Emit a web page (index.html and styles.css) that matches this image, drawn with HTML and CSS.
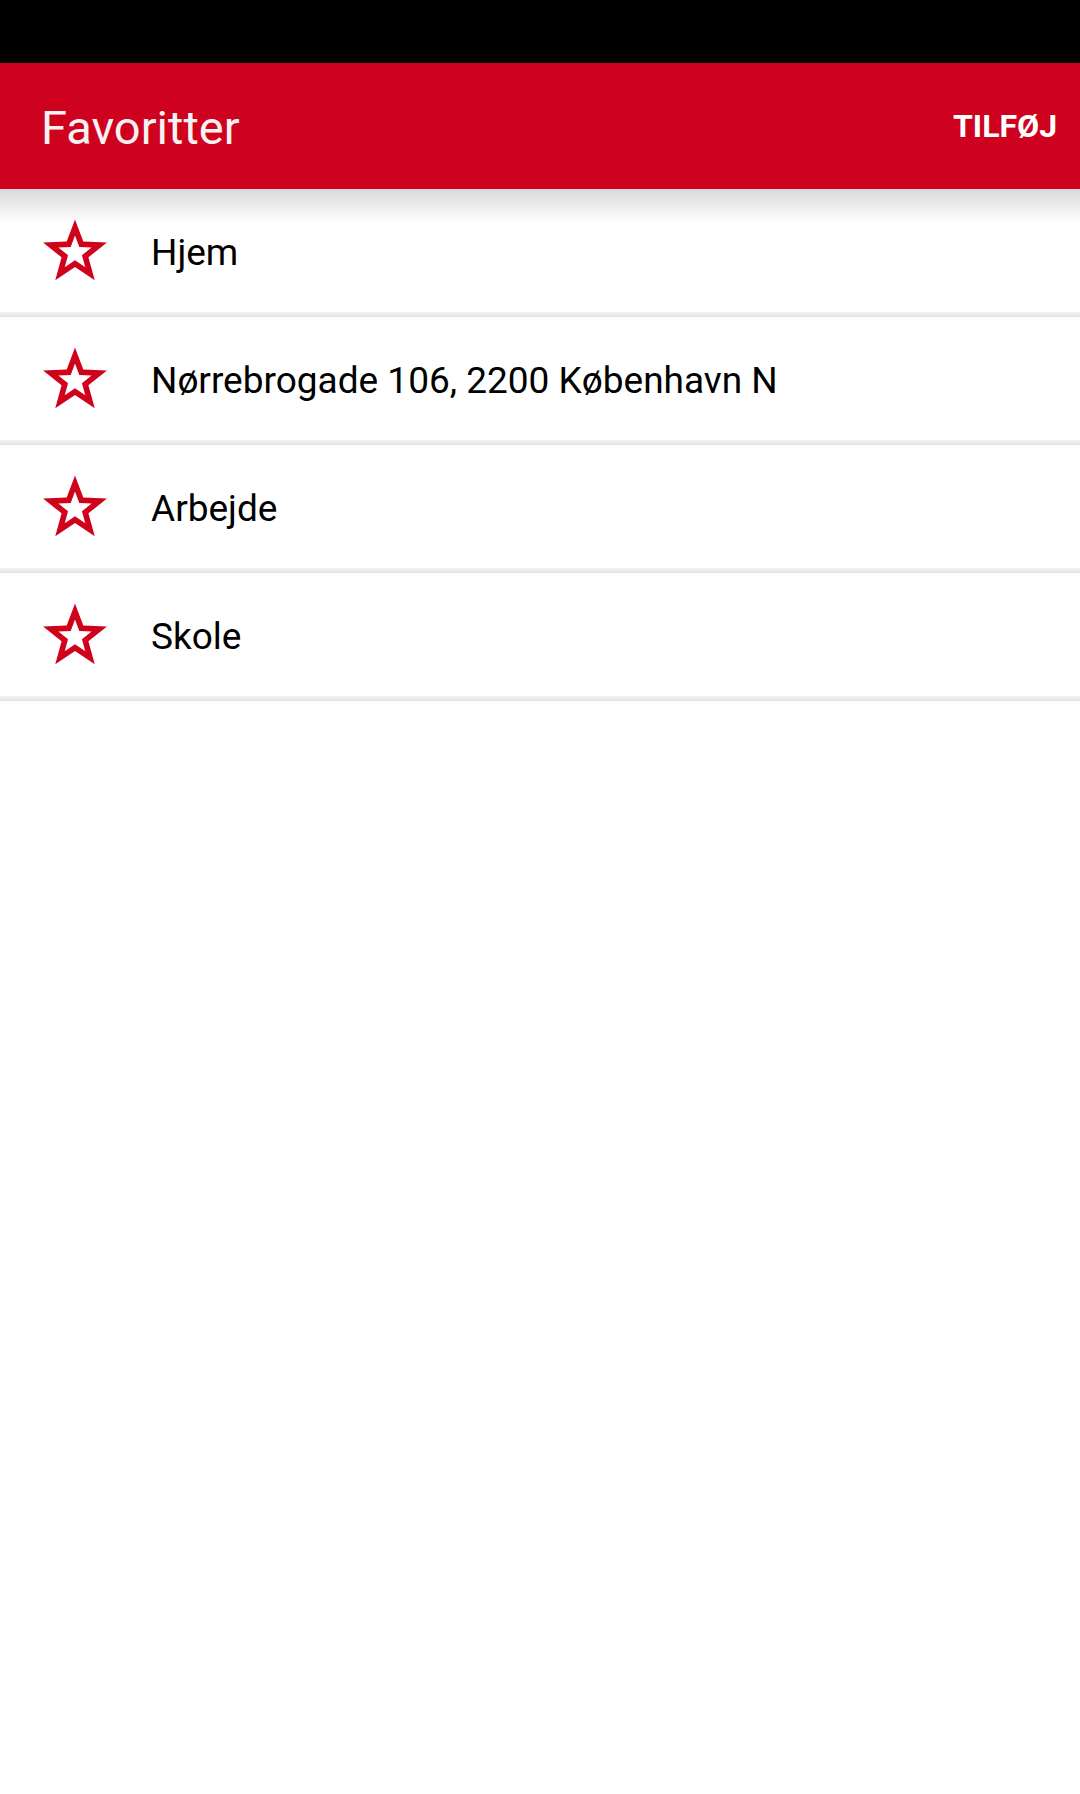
FILE: index.html
```html
<!DOCTYPE html>
<html lang="da">
<head>
<meta charset="utf-8">
<title>Favoritter</title>
<link rel="stylesheet" href="styles.css">
</head>
<body>
<div class="statusbar"></div>
<header class="appbar">
  <h1 class="title">Favoritter</h1>
  <button class="action">TILFØJ</button>
</header>
<main class="list">
  <div class="shadow"></div>
  <div class="row">
    <svg class="star" viewBox="-34 -34 68 68" width="68" height="68"><path fill-rule="evenodd" d="M0,-33.6 L8.29,-11.41 L31.96,-10.38 L13.41,4.36 L19.75,27.18 L0,14.1 L-19.75,27.18 L-13.41,4.36 L-31.96,-10.38 L-8.29,-11.41 Z M0,-17.47 L-4.31,-5.93 L-16.62,-5.4 L-6.97,2.27 L-10.27,14.13 L0,7.33 L10.27,14.13 L6.97,2.27 L16.62,-5.4 L4.31,-5.93 Z"/></svg>
    <span class="label">Hjem</span>
  </div>
  <div class="sep"></div>
  <div class="row">
    <svg class="star" viewBox="-34 -34 68 68" width="68" height="68"><path fill-rule="evenodd" d="M0,-33.6 L8.29,-11.41 L31.96,-10.38 L13.41,4.36 L19.75,27.18 L0,14.1 L-19.75,27.18 L-13.41,4.36 L-31.96,-10.38 L-8.29,-11.41 Z M0,-17.47 L-4.31,-5.93 L-16.62,-5.4 L-6.97,2.27 L-10.27,14.13 L0,7.33 L10.27,14.13 L6.97,2.27 L16.62,-5.4 L4.31,-5.93 Z"/></svg>
    <span class="label">Nørrebrogade 106, 2200 København N</span>
  </div>
  <div class="sep"></div>
  <div class="row">
    <svg class="star" viewBox="-34 -34 68 68" width="68" height="68"><path fill-rule="evenodd" d="M0,-33.6 L8.29,-11.41 L31.96,-10.38 L13.41,4.36 L19.75,27.18 L0,14.1 L-19.75,27.18 L-13.41,4.36 L-31.96,-10.38 L-8.29,-11.41 Z M0,-17.47 L-4.31,-5.93 L-16.62,-5.4 L-6.97,2.27 L-10.27,14.13 L0,7.33 L10.27,14.13 L6.97,2.27 L16.62,-5.4 L4.31,-5.93 Z"/></svg>
    <span class="label">Arbejde</span>
  </div>
  <div class="sep"></div>
  <div class="row">
    <svg class="star" viewBox="-34 -34 68 68" width="68" height="68"><path fill-rule="evenodd" d="M0,-33.6 L8.29,-11.41 L31.96,-10.38 L13.41,4.36 L19.75,27.18 L0,14.1 L-19.75,27.18 L-13.41,4.36 L-31.96,-10.38 L-8.29,-11.41 Z M0,-17.47 L-4.31,-5.93 L-16.62,-5.4 L-6.97,2.27 L-10.27,14.13 L0,7.33 L10.27,14.13 L6.97,2.27 L16.62,-5.4 L4.31,-5.93 Z"/></svg>
    <span class="label">Skole</span>
  </div>
  <div class="sep"></div>
</main>
</body>
</html>
```
FILE: styles.css
```css
html, body {
  margin: 0;
  padding: 0;
  background: #ffffff;
  font-family: Roboto, "Noto Sans", sans-serif;
}
.statusbar {
  height: 63px;
  background: #000000;
}
.appbar {
  height: 126px;
  background: #ce011e;
  display: flex;
  align-items: center;
  justify-content: space-between;
  padding: 0 23px 0 41px;
}
.title {
  margin: 0;
  font-size: 47px;
  font-weight: 400;
  color: #f7f2f2;
  line-height: 1;
  padding-top: 2px;
}
.action {
  background: none;
  border: none;
  padding: 0;
  font-family: Roboto, sans-serif;
  font-weight: 700;
  font-size: 32px;
  color: #ffffff;
  line-height: 1;
}
.list {
  position: relative;
}
.shadow {
  position: absolute;
  left: 0;
  right: 0;
  top: 0;
  height: 34px;
  background: linear-gradient(#d9d9d9, rgba(255,255,255,0));
  pointer-events: none;
}
.row {
  height: 123px;
  display: flex;
  align-items: center;
  padding-left: 41px;
}
.star {
  fill: #d0021b;
  flex: none;
  margin-top: 5px;
}
.label {
  margin-left: 42px;
  font-size: 37px;
  color: #000000;
  padding-top: 4px;
}
.sep {
  height: 5px;
  background: linear-gradient(#f3f3f3, #e3e3e3);
}
```
